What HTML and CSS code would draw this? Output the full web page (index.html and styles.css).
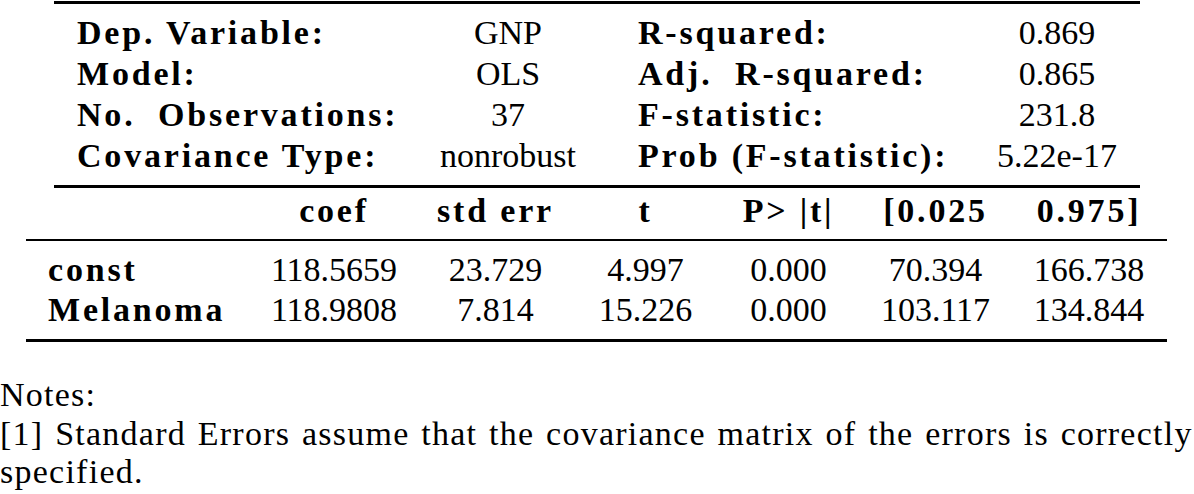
FILE: index.html
```html
<!DOCTYPE html>
<html lang="en">
<head>
  <meta charset="UTF-8">
  <title>OLS Regression Results</title>
  <link rel="stylesheet" href="styles.css">
</head>
<body>
  <table class="summary">
    <colgroup>
      <col class="s-label1">
      <col class="s-value1">
      <col class="s-label2">
      <col class="s-value2">
    </colgroup>
    <tbody>
      <tr>
        <th>Dep. Variable:</th><td>GNP</td>
        <th class="second">R-squared:</th><td>0.869</td>
      </tr>
      <tr>
        <th>Model:</th><td>OLS</td>
        <th class="second">Adj.&nbsp; R-squared:</th><td>0.865</td>
      </tr>
      <tr>
        <th>No.&nbsp; Observations:</th><td>37</td>
        <th class="second">F-statistic:</th><td>231.8</td>
      </tr>
      <tr>
        <th>Covariance Type:</th><td>nonrobust</td>
        <th class="second">Prob (F-statistic):</th><td>5.22e-17</td>
      </tr>
    </tbody>
  </table>

  <table class="coefs">
    <colgroup>
      <col class="c-label">
      <col class="c-coef">
      <col class="c-err">
      <col class="c-t">
      <col class="c-p">
      <col class="c-lo">
      <col class="c-hi">
    </colgroup>
    <thead>
      <tr>
        <th></th>
        <th>coef</th>
        <th>std err</th>
        <th>t</th>
        <th>P&gt; |t|</th>
        <th>[0.025</th>
        <th>0.975]</th>
      </tr>
    </thead>
    <tbody>
      <tr>
        <th>const</th>
        <td>118.5659</td>
        <td>23.729</td>
        <td>4.997</td>
        <td>0.000</td>
        <td>70.394</td>
        <td>166.738</td>
      </tr>
      <tr>
        <th>Melanoma</th>
        <td>118.9808</td>
        <td>7.814</td>
        <td>15.226</td>
        <td>0.000</td>
        <td>103.117</td>
        <td>134.844</td>
      </tr>
    </tbody>
  </table>

  <div class="notes">
    Notes:<br>
    [1] Standard Errors assume that the covariance matrix of the errors is correctly<br>
    specified.
  </div>
</body>
</html>
```

FILE: styles.css
```css
body {
  margin: 0;
  padding-top: 1px;
  background: #fff;
  color: #000;
  font-family: "Liberation Serif", "Times New Roman", serif;
  font-size: 34px;
}
table {
  border-collapse: collapse;
  table-layout: fixed;
}
th, td {
  padding: 0;
  white-space: nowrap;
}
th {
  font-weight: bold;
  letter-spacing: 2.8px;
}

/* summary block */
.summary {
  width: 1086px;
  margin-left: 54px;
  border-top: 3px solid #000;
  border-bottom: 3px solid #000;
}
.summary th,
.summary td {
  line-height: 41px;
}
.summary tr:first-child td,
.summary tr:first-child th {
  padding-top: 8px;
}
.summary tr:last-child td,
.summary tr:last-child th {
  padding-bottom: 9px;
}
.summary th {
  text-align: left;
  padding-left: 23px;
}
.summary th.second {
  padding-left: 42px;
}
.summary td {
  text-align: center;
}
.s-label1 { width: 366px; }
.s-value1 { width: 176px; }
.s-label2 { width: 378px; }
.s-value2 { width: 166px; }

/* coefficient block */
.coefs {
  width: 1141px;
  margin-left: 26px;
  border-bottom: 3px solid #000;
}
.coefs thead tr {
  border-bottom: 2px solid #000;
}
.coefs thead th {
  text-align: center;
  line-height: 41px;
  padding: 2px 0 8px;
}
.coefs tbody th,
.coefs tbody td {
  line-height: 40px;
}
.coefs tbody tr:first-child td,
.coefs tbody tr:first-child th {
  padding-top: 9px;
}
.coefs tbody tr:last-child td,
.coefs tbody tr:last-child th {
  padding-bottom: 9px;
}
.coefs tbody th {
  text-align: left;
  padding-left: 22px;
}
.coefs td {
  text-align: center;
}
.c-label { width: 225px; }
.c-coef { width: 166px; }
.c-err { width: 157px; }
.c-t { width: 143px; }
.c-p { width: 143px; }
.c-lo { width: 151px; }
.c-hi { width: 156px; }

.notes {
  margin-top: 34px;
  line-height: 38.5px;
  white-space: nowrap;
  word-spacing: 2px;
  letter-spacing: 1.25px;
}
```
